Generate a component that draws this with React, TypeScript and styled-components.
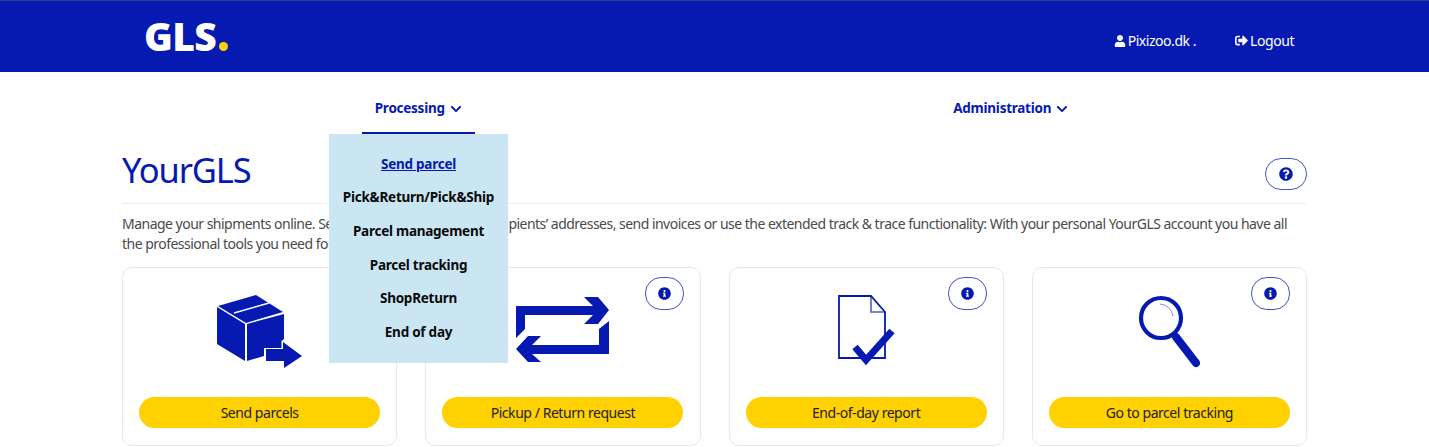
import styled, { createGlobalStyle } from 'styled-components';
import { FaChevronDown, FaInfoCircle, FaQuestionCircle, FaSignOutAlt, FaUser } from 'react-icons/fa';

const BLUE = '#061ab1';
const YELLOW = '#ffd100';

const BoxIcon = () => (
    <svg width="85" height="73" viewBox="0 0 85 73" fill={BLUE}>
        <polygon points="1,11 39,0 66,17 29,28" />
        <path d="M17 18 L52 8" stroke="#fff" strokeWidth="1.4" />
        <polygon points="0,12 28,29 28,66 0,49" />
        <polygon points="30,29 67,19 67,44 64.5,46 64.5,53 47,53 47,61 30,66" />
        <polygon points="49,54 66,54 66,47 85,61 67,73 67,66 49,66" />
    </svg>
);

const SwapIcon = () => (
    <svg width="93" height="67" viewBox="0 -2 93 67" fill={BLUE}>
        <polygon points="0,9 77,9 68,0 82,0 93,13 82,27 68,27 77,18 9,18 9,32 0,41" />
        <polygon points="93,24 83,32 83,48 16,48 25,39 12,39 0,52 12,65 25,65 16,57 93,57" />
    </svg>
);

const ReportIcon = () => (
    <svg width="57" height="73" viewBox="0 0 57 73" fill="none" stroke={BLUE}>
        <path d="M1 1 H33 L47 17 V63 H1 Z" strokeWidth="1.8" />
        <path d="M33 1 V17 H47" strokeWidth="1.6" opacity="0.7" />
        <path d="M17 52 L28 65 L54 36" strokeWidth="7" />
    </svg>
);

const SearchIcon = () => (
    <svg width="62" height="73" viewBox="0 0 62 73" fill="none" stroke={BLUE}>
        <circle cx="23" cy="23" r="20" strokeWidth="4.2" />
        <path d="M38 42 L58 68" strokeWidth="8" strokeLinecap="round" />
        <path d="M22 9 A14 14 0 0 1 35 21" strokeWidth="1" opacity="0.5" />
    </svg>
);

const cards = [
    { label: 'Send parcels', icon: <BoxIcon />, info: false },
    { label: 'Pickup / Return request', icon: <SwapIcon />, info: true },
    { label: 'End-of-day report', icon: <ReportIcon />, info: true },
    { label: 'Go to parcel tracking', icon: <SearchIcon />, info: true },
];

const menu = ['Send parcel', 'Pick&Return/Pick&Ship', 'Parcel management', 'Parcel tracking', 'ShopReturn', 'End of day'];

const App = () => {
    return (
        <>
            <GlobalStyle />
            <Header>
                <Logo>
                    GLS<LogoDot />
                </Logo>
                <UserArea>
                    <UserLink>
                        <FaUser size={12} /> Pixizoo.dk .
                    </UserLink>
                    <UserLink>
                        <FaSignOutAlt size={13} /> Logout
                    </UserLink>
                </UserArea>
            </Header>
            <Main>
                <Nav>
                    <NavItem>
                        <NavLabel $active>
                            Processing <Chevron />
                        </NavLabel>
                        <Dropdown>
                            {menu.map((item, i) => (
                                <MenuLink key={item} $active={i === 0}>
                                    {item}
                                </MenuLink>
                            ))}
                        </Dropdown>
                    </NavItem>
                    <NavItem>
                        <NavLabel>
                            Administration <Chevron />
                        </NavLabel>
                    </NavItem>
                </Nav>
                <TitleRow>
                    <Title>YourGLS</Title>
                    <RoundButton>
                        <FaQuestionCircle size={14} />
                    </RoundButton>
                </TitleRow>
                <Intro>
                    Manage your shipments online. Send parcels, manage your recipients’ addresses, send invoices or use the extended track &amp; trace functionality: With your personal YourGLS account you have all the professional tools you need for efficient parcel processing.
                </Intro>
                <CardGrid>
                    {cards.map((card) => (
                        <Card key={card.label}>
                            {card.info && (
                                <InfoSlot>
                                    <RoundButton $small>
                                        <FaInfoCircle size={13} />
                                    </RoundButton>
                                </InfoSlot>
                            )}
                            <IconArea>{card.icon}</IconArea>
                            <CardButton>{card.label}</CardButton>
                        </Card>
                    ))}
                </CardGrid>
            </Main>
        </>
    );
};

export default App;

const GlobalStyle = createGlobalStyle`
    html, body {
        margin: 0;
        background: #fff;
        overflow: hidden;
        font-family: 'Noto Sans', 'Liberation Sans', sans-serif;
    }
`;

const Header = styled.header`
    height: 72px;
    box-sizing: border-box;
    background: ${BLUE};
    border-top: 1px solid #2a3a8c;
    display: flex;
    align-items: center;
    justify-content: space-between;
    padding: 0 135px 0 144px;
`;

const Logo = styled.div`
    display: flex;
    align-items: baseline;
    color: #fff;
    font-family: 'Open Sans', sans-serif;
    font-size: 39px;
    font-weight: 800;
    letter-spacing: -0.6px;
    margin-top: -2px;
`;

const LogoDot = styled.span`
    width: 9px;
    height: 9px;
    border-radius: 50%;
    background: ${YELLOW};
    margin-left: 3px;
`;

const UserArea = styled.div`
    display: flex;
    gap: 39px;
    margin-top: 8px;
`;

const UserLink = styled.a`
    color: #fff;
    font-size: 14px;
    display: flex;
    align-items: center;
    gap: 2px;
    letter-spacing: -0.45px;
`;

const Main = styled.main`
    width: 1185px;
    margin-left: 122px;
`;

const Nav = styled.nav`
    display: grid;
    grid-template-columns: 1fr 1fr;
`;

const NavItem = styled.div`
    position: relative;
    display: flex;
    justify-content: center;
    height: 62px;
`;

const NavLabel = styled.a<{ $active?: boolean }>`
    min-width: 113px;
    height: 62px;
    box-sizing: border-box;
    padding-top: 24px;
    padding-bottom: 12px;
    display: flex;
    align-items: center;
    justify-content: center;
    gap: 5px;
    white-space: nowrap;
    color: ${BLUE};
    font-size: 13.5px;
    font-weight: 700;
    letter-spacing: -0.25px;
    border-bottom: 2px solid ${(p) => (p.$active ? BLUE : 'transparent')};
`;

const Chevron = styled(FaChevronDown)`
    width: 12px;
    height: 12px;
    flex-shrink: 0;
    margin-top: 2px;
`;

const Dropdown = styled.div`
    position: absolute;
    top: 62px;
    left: 207px;
    width: 179px;
    height: 229px;
    box-sizing: border-box;
    background: #c9e6f2;
    padding: 13px 0;
    display: flex;
    flex-direction: column;
    align-items: center;
    z-index: 2;
`;

const MenuLink = styled.a<{ $active?: boolean }>`
    height: 33.6px;
    flex-shrink: 0;
    display: flex;
    align-items: center;
    white-space: nowrap;
    font-size: 13.5px;
    font-weight: 700;
    letter-spacing: -0.25px;
    color: ${(p) => (p.$active ? BLUE : '#0a0a0a')};
    text-decoration: ${(p) => (p.$active ? 'underline' : 'none')};
`;

const TitleRow = styled.div`
    display: flex;
    align-items: flex-end;
    justify-content: space-between;
    height: 70px;
    padding-bottom: 13px;
    box-sizing: border-box;
    border-bottom: 1px solid #eee;
`;

const Title = styled.h1`
    margin: 0 0 -2px;
    font-size: 34.5px;
    font-weight: 400;
    letter-spacing: -1.1px;
    color: ${BLUE};
    line-height: 44px;
`;

const RoundButton = styled.button<{ $small?: boolean }>`
    width: ${(p) => (p.$small ? '39px' : '42px')};
    height: ${(p) => (p.$small ? '33px' : '32px')};
    border-radius: 16px;
    border: 1px solid #4454c4;
    background: #fff;
    color: ${BLUE};
    padding: 0;
    display: flex;
    align-items: center;
    justify-content: center;
`;

const Intro = styled.p`
    margin: 10px 0 13px;
    padding-right: 20px;
    font-size: 14px;
    letter-spacing: -0.52px;
    line-height: 20px;
    color: #4a4a4a;
`;

const CardGrid = styled.div`
    display: grid;
    grid-template-columns: repeat(4, 1fr);
    gap: 28px;
`;

const Card = styled.div`
    position: relative;
    height: 179px;
    box-sizing: border-box;
    border: 1px solid #e8e8e8;
    border-radius: 10px;
    padding: 27px 16px 16px;
    display: flex;
    flex-direction: column;
    align-items: center;
`;

const InfoSlot = styled.div`
    position: absolute;
    top: 9px;
    right: 16px;
`;

const IconArea = styled.div`
    height: 102px;
    display: flex;
    align-items: flex-start;
    justify-content: center;
`;

const CardButton = styled.button`
    width: 241px;
    height: 31px;
    border: none;
    border-radius: 16px;
    background: ${YELLOW};
    color: #222;
    font-family: inherit;
    font-size: 14px;
    letter-spacing: -0.45px;
`;
